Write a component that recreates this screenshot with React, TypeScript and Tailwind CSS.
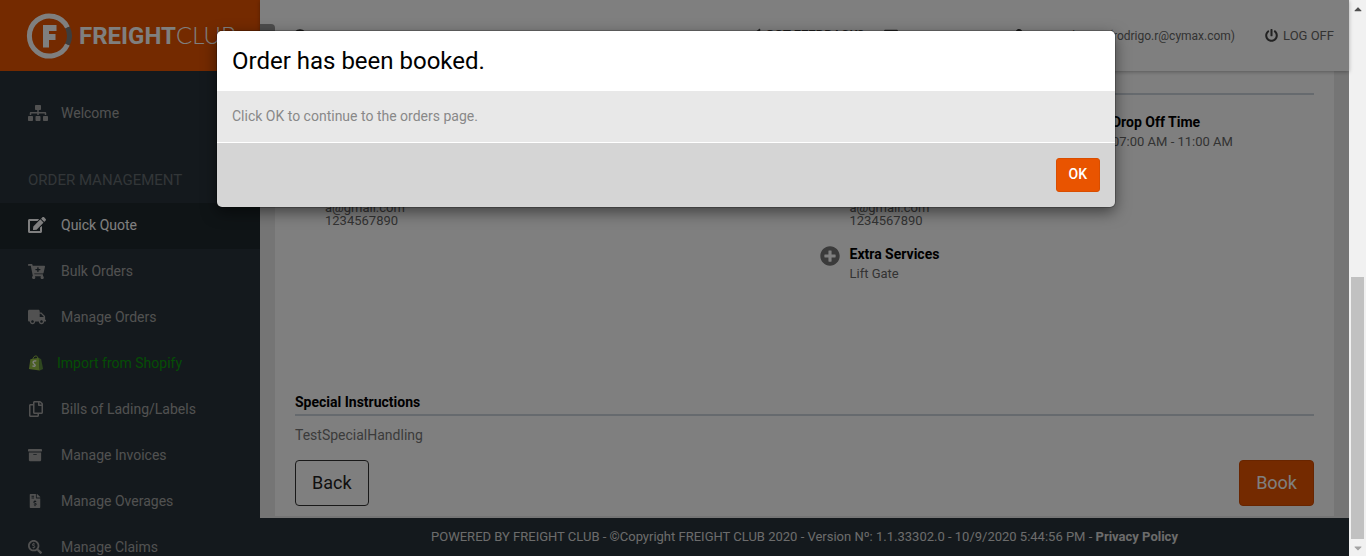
import type { ComponentType } from "react";
import {
  FaArchive,
  FaBullhorn,
  FaCartPlus,
  FaCaretDown,
  FaCaretUp,
  FaEdit,
  FaEnvelope,
  FaFileInvoiceDollar,
  FaPlusCircle,
  FaPowerOff,
  FaRegCopy,
  FaSearchDollar,
  FaSitemap,
  FaTruck,
  FaUser,
  FaUserCircle,
} from "react-icons/fa";

function Logo() {
  return (
    <a href="#" aria-label="Freight Club" className="flex h-[71px] shrink-0 items-center gap-[7px] bg-[#e95400] pl-[26px] text-white">
      <svg viewBox="0 0 46 46" className="size-[46px] shrink-0" fill="none">
        <path d="M41.500 14.500A20 20 0 1 0 41.500 31.500" stroke="#fff" strokeWidth="5" />
        <path d="M41.500 14.500A20 20 0 0 1 41.500 31.500" stroke="#7b7b7b" strokeWidth="5" />
        <path d="M17 12h13.500v6H23v3h6.500v6H23v7.500h-6z" fill="#fff" />
      </svg>
      <span className="flex items-baseline text-2xl leading-none whitespace-nowrap">
        <span className="font-bold">FREIGHT</span>
        <span className="font-[Lato] font-light">CLUB</span>
      </span>
    </a>
  );
}

function ShopifyBag({ className }: { className?: string }) {
  return (
    <svg viewBox="0 0 16 17" className={className}>
      <path d="M4.500 5C5 2 6.500 1 8 1s2 1.500 2 4" fill="none" stroke="#95bf47" strokeWidth="1" />
      <path d="M2 4.500 11 3l1 13.500L.5 14.800z" fill="#95bf47" />
      <path d="M11 3l2.500 1.500L15.500 15 12 16.500z" fill="#5e8e3e" />
      <path d="M8.300 6.500C6.500 5.800 4.900 6.600 4.900 8c0 1.500 2.300 1.600 2.200 3-.1 1.200-1.600 1.300-2.900.4" fill="none" stroke="#fff" strokeWidth="1.500" />
    </svg>
  );
}

type Item = { label: string; icon: ComponentType<{ className?: string }>; active?: boolean; shop?: boolean; size?: string };

const items: Item[] = [
  { label: "Quick Quote", icon: FaEdit, active: true, size: "size-[18px]" },
  { label: "Bulk Orders", icon: FaCartPlus, size: "size-[17px]" },
  { label: "Manage Orders", icon: FaTruck, size: "size-[18px]" },
  { label: "Import from Shopify", icon: ShopifyBag, shop: true, size: "size-4" },
  { label: "Bills of Lading/Labels", icon: FaRegCopy, size: "size-4" },
  { label: "Manage Invoices", icon: FaArchive, size: "size-[14px]" },
  { label: "Manage Overages", icon: FaFileInvoiceDollar, size: "size-[14px]" },
  { label: "Manage Claims", icon: FaSearchDollar, size: "size-[14px]" },
];

function NavItem({ label, icon: Icon, active, shop, size = "size-5" }: Item) {
  return (
    <a
      href="#"
      className={`flex h-[46px] shrink-0 items-center pb-[2px] pl-7 text-sm ${
        active ? "bg-[#1f282d] text-white" : shop ? "text-[#0a9a0a]" : "text-[#a3a3a3]"
      }`}
    >
      <span className={`flex shrink-0 ${shop ? "w-[29px]" : "w-[33px]"}`}>
        <Icon className={size} />
      </span>
      {label}
    </a>
  );
}

function Sidebar() {
  return (
    <aside className="flex w-[260px] shrink-0 flex-col overflow-hidden bg-[#29333a]">
      <Logo />
      <nav className="flex flex-col pt-5">
        <NavItem label="Welcome" icon={FaSitemap} />
        <h2 className="flex h-[66px] items-center pt-5 pl-7 text-[15px] text-[#656c71]">ORDER MANAGEMENT</h2>
        {items.map((item) => (
          <NavItem key={item.label} {...item} />
        ))}
      </nav>
    </aside>
  );
}

function TopBar() {
  return (
    <header className="z-10 flex h-[71px] shrink-0 items-center bg-white pr-[15px] text-[13px] text-[#666] shadow-[0_1px_4px_rgba(0,0,0,0.3)]">
      <button aria-label="Toggle menu" className="h-6 w-[15px] rounded-r-sm bg-[#9a9a9a]" />
      <FaUserCircle className="ml-[18px] size-[14px] text-[#333]" />
      <div className="ml-auto flex items-center">
        <a href="#" className="mr-5 flex items-center gap-1 pb-[2px] font-medium text-[#444]">
          <FaBullhorn className="size-[13px]" />
          GOT FEEDBACK?
        </a>
        <a href="#" aria-label="Messages" className="mr-[114px] pb-[2px]">
          <FaEnvelope className="size-[14px] text-[#444]" />
        </a>
        <a href="#" className="flex items-center gap-7 text-xs">
          <FaUser className="size-[14px] text-[#333]" />
          Rodrigo R (rodrigo.r@cymax.com)
        </a>
        <a href="#" className="ml-[30px] flex items-center gap-[5px]">
          <FaPowerOff className="size-[13px] text-[#444]" />
          LOG OFF
        </a>
      </div>
    </header>
  );
}

function Contact() {
  return (
    <div className="text-[13px] leading-[13px] text-[#666]">
      <p>a@gmail.com</p>
      <p>1234567890</p>
    </div>
  );
}

function Order() {
  return (
    <main className="flex min-h-0 flex-1 flex-col overflow-hidden bg-[#ebebeb] px-[15px] pb-[2px]">
      <section className="flex flex-1 flex-col bg-white px-5 pt-[22px]">
        <div className="flex h-[108px] shrink-0 justify-end border-t-2 border-[#cdd5dd] pt-[17px]">
          <div className="w-[202px]">
            <h3 className="text-sm font-bold text-black">Drop Off Time</h3>
            <p className="text-[13px] leading-5 text-[#666]">07:00 AM - 11:00 AM</p>
          </div>
        </div>
        <div className="grid h-[191px] shrink-0 grid-cols-2">
          <div className="pl-[30px]">
            <Contact />
          </div>
          <div className="pl-[15px]">
            <div className="pl-[30px]">
              <Contact />
            </div>
            <div className="flex items-start gap-[10px] pt-[17px]">
              <FaPlusCircle className="mt-[2px] size-5 text-[#777]" />
              <div>
                <h3 className="text-sm font-bold text-black">Extra Services</h3>
                <p className="text-[13px] leading-5 text-[#666]">Lift Gate</p>
              </div>
            </div>
          </div>
        </div>
        <h3 className="border-b-2 border-[#cdd5dd] pb-[2px] text-sm font-bold text-black">Special Instructions</h3>
        <p className="pt-[9px] text-sm text-[#777]">TestSpecialHandling</p>
        <div className="flex justify-between pt-[15px]">
          <button className="h-[46px] rounded border border-[#333] px-4 text-lg text-[#222]">Back</button>
          <button className="h-[46px] rounded border border-[#d14b00] bg-[#e95400] px-4 text-lg text-white">Book</button>
        </div>
      </section>
    </main>
  );
}

function Scrollbar() {
  return (
    <div aria-hidden="true" className="flex w-[17px] shrink-0 flex-col items-center bg-[#f1f1f1]">
      <FaCaretUp className="mt-[3px] size-3 text-[#505050]" />
      <div className="mt-auto h-[262px] w-[13px] bg-[#c1c1c1]" />
      <FaCaretDown className="mt-[3px] mb-[2px] size-3 text-[#a3a3a3]" />
    </div>
  );
}

function Dialog() {
  return (
    <div className="absolute inset-0 z-20 flex items-start justify-center bg-black/50 pt-[31px] pr-[17px]">
      <div
        role="dialog"
        aria-modal="true"
        aria-labelledby="dialog-title"
        className="w-[898px] overflow-hidden rounded-[5px] bg-[#d5d5d5] shadow-[0_5px_15px_rgba(0,0,0,0.5),0_0_0_1px_rgba(0,0,0,0.2)]"
      >
        <h1 id="dialog-title" className="bg-white px-[15px] pt-[14px] pb-[13px] text-2xl leading-[33px] text-black">
          Order has been booked.
        </h1>
        <p className="border-b border-white bg-[#e8e8e8] px-[15px] pt-[15px] pb-4 text-sm text-[#888]">
          Click OK to continue to the orders page.
        </p>
        <div className="flex justify-end p-[15px]">
          <button className="h-[34px] rounded-[3px] border border-[#d94e00] bg-[#e95400] px-3 pb-[2px] text-sm font-medium text-white">OK</button>
        </div>
      </div>
    </div>
  );
}

export default function App() {
  return (
    <div className="flex h-screen overflow-hidden font-[Roboto,sans-serif]">
      <div className="relative flex min-w-0 flex-1">
        <Sidebar />
        <div className="flex min-w-0 flex-1 flex-col">
          <TopBar />
          <Order />
          <footer className="h-[38px] shrink-0 bg-[#29333a] pt-[9px] text-center text-[13px] leading-5 text-[#d8d8d8]">
            POWERED BY FREIGHT CLUB - ©Copyright FREIGHT CLUB 2020 - Version Nº: 1.1.33302.0 - 10/9/2020 5:44:56 PM -{" "}
            <a href="#" className="font-bold">Privacy Policy</a>
          </footer>
        </div>
        <Dialog />
      </div>
      <Scrollbar />
    </div>
  );
}
